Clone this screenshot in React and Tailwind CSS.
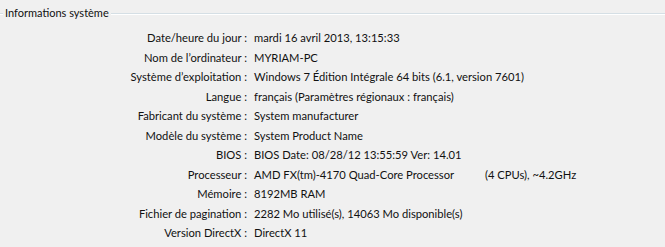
const rows = [
  ["Date/heure du jour", "mardi 16 avril 2013, 13:15:33"],
  ["Nom de l’ordinateur", "MYRIAM-PC"],
  ["Système d’exploitation", "Windows 7 Édition Intégrale 64 bits (6.1, version 7601)"],
  ["Langue", "français (Paramètres régionaux : français)"],
  ["Fabricant du système", "System manufacturer"],
  ["Modèle du système", "System Product Name"],
  ["BIOS", "BIOS Date: 08/28/12 13:55:59 Ver: 14.01"],
  ["Processeur", null],
  ["Mémoire", "8192MB RAM"],
  ["Fichier de pagination", "2282 Mo utilisé(s), 14063 Mo disponible(s)"],
  ["Version DirectX", "DirectX 11"],
];

export default function App() {
  return (
    <div
      className="w-[665px] h-[247px] bg-[#f0f0f0] text-[11.2px] text-[#111] overflow-hidden"
      style={{ fontFamily: 'Lato, "Open Sans", sans-serif' }}
    >
      <div className="flex items-center h-[26px]">
        <div className="w-[3px] h-[2px] border-t border-[#d5dfe5] bg-white mt-[1px]" />
        <span className="px-[2px] leading-[15px] -mt-[1px] text-[11px]">Informations système</span>
        <div className="flex-1 h-[2px] border-t border-[#d5dfe5] bg-white mt-[1px]" />
      </div>
      <div className="grid grid-cols-[247px_1fr] gap-x-[7px] pt-[2px]">
        {rows.map(([label, value]) => (
          <div key={label} className="contents">
            <div className="text-right leading-[19.5px] whitespace-nowrap">{label} :</div>
            <div className="leading-[19.5px] whitespace-nowrap">
              {value ?? (
                <>
                  <span className="inline-block w-[231px]">AMD FX(tm)-4170 Quad-Core Processor</span>
                  <span>(4 CPUs), ~4.2GHz</span>
                </>
              )}
            </div>
          </div>
        ))}
      </div>
    </div>
  );
}
